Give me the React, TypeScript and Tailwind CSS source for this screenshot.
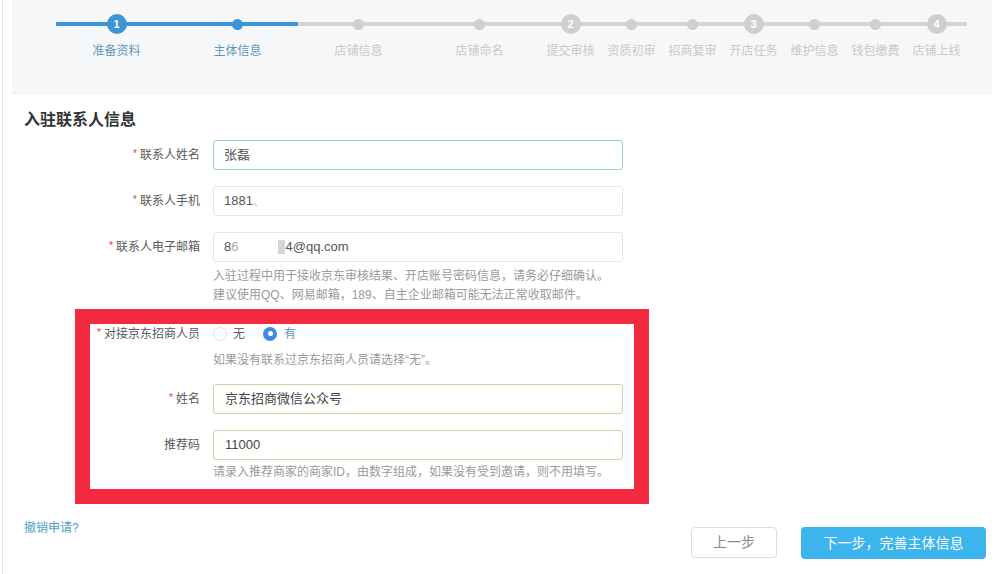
import React from 'react'

const font = { fontFamily: '"Liberation Sans", "Noto Sans CJK SC", sans-serif' }

type Step = { label: string; num?: number; wide: boolean; done: boolean }

const steps: Step[] = [
  { label: '准备资料', num: 1, wide: true, done: true },
  { label: '主体信息', wide: true, done: true },
  { label: '店铺信息', wide: true, done: false },
  { label: '店铺命名', wide: true, done: false },
  { label: '提交审核', num: 2, wide: false, done: false },
  { label: '资质初审', wide: false, done: false },
  { label: '招商复审', wide: false, done: false },
  { label: '开店任务', num: 3, wide: false, done: false },
  { label: '维护信息', wide: false, done: false },
  { label: '钱包缴费', wide: false, done: false },
  { label: '店铺上线', num: 4, wide: false, done: false },
]

function StepCol({ step }: { step: Step }) {
  const blue = step.done
  return (
    <div className={step.wide ? 'w-[121px] flex flex-col items-center' : 'w-[61px] flex flex-col items-center'}>
      <div className="relative w-full h-[20px] flex items-center justify-center">
        <div className={blue ? 'absolute left-0 right-0 top-[8px] h-[4px] bg-[#3d95d6]' : 'absolute left-0 right-0 top-[8px] h-[4px] bg-[#d4d4d4]'} />
        {step.num ? (
          <div className={blue ? 'relative w-[20px] h-[20px] rounded-full bg-[#3d95d6] text-white text-[11px] font-bold flex items-center justify-center' : 'relative w-[20px] h-[20px] rounded-full bg-[#cfcfcf] text-white text-[11px] font-bold flex items-center justify-center'}>
            {step.num}
          </div>
        ) : (
          <div className={blue ? 'relative w-[11px] h-[11px] rounded-full bg-[#3d95d6]' : 'relative w-[11px] h-[11px] rounded-full bg-[#cfcfcf]'} />
        )}
      </div>
      <div className={blue ? 'mt-[9px] text-[12px] leading-[16px] whitespace-nowrap text-[#5f97bd]' : 'mt-[9px] text-[12px] leading-[16px] whitespace-nowrap text-[#c9c9c9]'}>
        {step.label}
      </div>
    </div>
  )
}

function Label({ text, required, width }: { text: string; required?: boolean; width: string }) {
  return (
    <div className={`${width} text-right text-[12px] text-[#5a5a5a] whitespace-nowrap`}>
      {required && <span className="text-[#e4393c] text-[10px] mr-[3px] align-top">*</span>}
      {text}
    </div>
  )
}

export default function App() {
  return (
    <div className="w-[1001px] h-[574px] bg-white overflow-hidden" style={font}>
      <div className="ml-[2px] h-full border-l border-[#e6e6e6] pr-[15px]">
        {/* steps */}
        <div className="ml-[9px] w-[980px] h-[94px] bg-[#f6f7f8] border-b border-[#eeeeee] pl-[44px] pt-[14px] flex">
          {steps.map((s) => (
            <StepCol key={s.label} step={s} />
          ))}
        </div>

        <div className="mt-[16px] pl-[21px] text-[16px] leading-[20px] font-bold text-[#333]">入驻联系人信息</div>

        <div className="mt-[10px] flex items-center">
          <Label text="联系人姓名" required width="w-[197px]" />
          <div className="ml-[13px] w-[410px] h-[30px] border border-[#9fd0c2] rounded-[3px] pl-[10px] flex items-center text-[13px] text-[#555]">
            张磊
          </div>
        </div>
        <div className="mt-[16px] flex items-center">
          <Label text="联系人手机" required width="w-[197px]" />
          <div className="ml-[13px] w-[410px] h-[30px] border border-[#e6e6e6] rounded-[3px] pl-[10px] flex items-center text-[13px] text-[#555]">
            1881<span className="text-[#c8c8c8]">、</span>
          </div>
        </div>
        <div className="mt-[16px] flex items-center">
          <Label text="联系人电子邮箱" required width="w-[197px]" />
          <div className="ml-[13px] w-[410px] h-[30px] border border-[#e6e6e6] rounded-[3px] pl-[10px] flex items-center text-[13px] text-[#555]">
            8<span className="text-[#aaa]">6</span>
            <span className="inline-block w-[40px]" />
            <span className="inline-block w-[7px] h-[14px] bg-[#d6d6d6]" />
            4@qq.com
          </div>
        </div>
        <div className="mt-[5px] pl-[210px] text-[12px] leading-[19px] text-[#9a9a9a]">
          <div>入驻过程中用于接收京东审核结果、开店账号密码信息，请务必仔细确认。</div>
          <div>建议使用QQ、网易邮箱，189、自主企业邮箱可能无法正常收取邮件。</div>
        </div>

        {/* highlighted block */}
        <div className="mt-[4px] ml-[72px] w-[574px] border-[15px] border-[#f32a3f] bg-white pb-[7px]">
          <div className="h-[19px] flex items-center">
            <Label text="对接京东招商人员" required width="w-[110px]" />
            <div className="ml-[13px] flex items-center text-[12px]">
              <span className="w-[14px] h-[14px] rounded-full border border-[#e2e2e2] bg-white" />
              <span className="ml-[6px] text-[#666]">无</span>
              <span className="ml-[18px] w-[14px] h-[14px] rounded-full bg-[#3a8de0] flex items-center justify-center">
                <span className="w-[5px] h-[5px] rounded-full bg-white" />
              </span>
              <span className="ml-[7px] text-[#5f97bd]">有</span>
            </div>
          </div>
          <div className="mt-[8px] pl-[123px] text-[12px] leading-[19px] text-[#9a9a9a]">
            如果没有联系过京东招商人员请选择“无”。
          </div>
          <div className="mt-[14px] flex items-center">
            <Label text="姓名" required width="w-[110px]" />
            <div className="ml-[13px] w-[410px] h-[30px] border border-[#c3d6a6] rounded-[3px] pl-[11px] flex items-center text-[13px] text-[#444]">
              京东招商微信公众号
            </div>
          </div>
          <div className="mt-[16px] flex items-center">
            <Label text="推荐码" width="w-[110px]" />
            <div className="ml-[13px] w-[410px] h-[30px] border border-[#c3d6a6] rounded-[3px] pl-[11px] flex items-center text-[13px] text-[#444]">
              11000
            </div>
          </div>
          <div className="mt-[3px] pl-[123px] text-[12px] leading-[19px] text-[#9a9a9a] whitespace-nowrap">
            请录入推荐商家的商家ID，由数字组成，如果没有受到邀请，则不用填写。
          </div>
        </div>

        {/* footer */}
        <div className="mt-[16px] flex justify-between items-start">
          <div className="pl-[21px] text-[12px] leading-[16px] text-[#4a9fbf]">撤销申请?</div>
          <div className="mt-[7px] flex">
            <button className="w-[86px] h-[31px] border border-[#dcdcdc] rounded-[4px] bg-white text-[14px] text-[#888]">
              上一步
            </button>
            <button className="ml-[24px] w-[185px] h-[32px] rounded-[4px] bg-[#3cb4ec] text-[14px] text-white">
              下一步，完善主体信息
            </button>
          </div>
        </div>
      </div>
    </div>
  )
}
